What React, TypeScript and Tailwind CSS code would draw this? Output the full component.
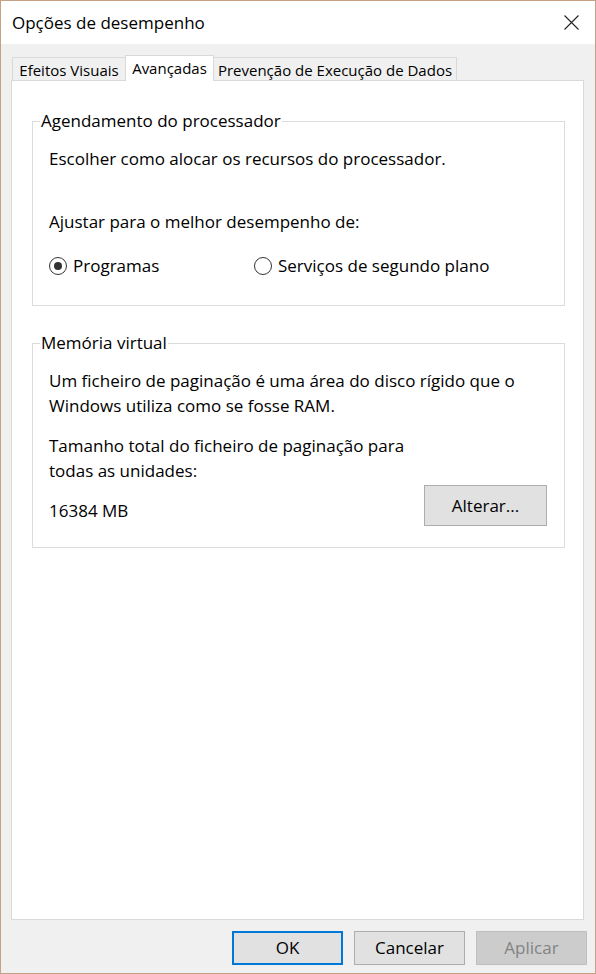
import React from "react";

function Radio({ checked }: { checked?: boolean }) {
  return (
    <span className="w-[18px] h-[18px] rounded-full border border-[#333333] bg-white flex items-center justify-center shrink-0">
      {checked && <span className="w-[8px] h-[8px] rounded-full bg-[#333333]" />}
    </span>
  );
}

export default function App() {
  return (
    <div className="w-[596px] h-[974px] border border-[#c7a184] bg-[#f0f0f0] flex flex-col text-black font-['Open_Sans',sans-serif] overflow-hidden">
      <div className="h-[43px] bg-white flex items-center justify-between pl-[11px] pr-[16px] shrink-0">
        <span className="text-[17px] leading-[24px]">Opções de desempenho</span>
        <svg width="15" height="15" viewBox="0 0 15 15">
          <path d="M0.5 0.5 L14.5 14.5 M14.5 0.5 L0.5 14.5" stroke="#222" strokeWidth="1.1" fill="none" />
        </svg>
      </div>

      <div className="pt-[11px] pl-[11px] flex items-end shrink-0 text-[15px]">
        <div className="w-[113px] h-[23px] border-l border-t border-[#d9d9d9] bg-[#f0f0f0] flex items-center justify-center pt-[2px]">
          Efeitos Visuais
        </div>
        <div className="relative z-10 w-[89px] h-[26px] -mb-px border-l border-r border-t border-[#d9d9d9] bg-white flex items-center justify-center">
          Avançadas
        </div>
        <div className="w-[243px] h-[23px] border-r border-t border-[#d9d9d9] bg-[#f0f0f0] flex items-center justify-center pt-[2px]">
          Prevenção de Execução de Dados
        </div>
      </div>

      <div className="ml-[10px] w-[573px] h-[840px] border border-[#d9d9d9] bg-white shrink-0 text-[17px] leading-[25px]">
        <fieldset className="ml-[20px] mt-[28px] w-[533px] border border-[#dcdcdc] pb-[27px]">
          <legend className="ml-[7px] px-px leading-[24px]">Agendamento do processador</legend>
          <div className="pl-[16px]">
            <div className="pt-[13px]">Escolher como alocar os recursos do processador.</div>
            <div className="mt-[38px]">Ajustar para o melhor desempenho de:</div>
            <div className="mt-[19px] flex items-center">
              <div className="flex items-center w-[205px]">
                <Radio checked />
                <span className="ml-[6px]">Programas</span>
              </div>
              <div className="flex items-center">
                <Radio />
                <span className="ml-[6px]">Serviços de segundo plano</span>
              </div>
            </div>
          </div>
        </fieldset>

        <fieldset className="ml-[20px] mt-[25px] w-[533px] border border-[#dcdcdc] pb-[21px]">
          <legend className="ml-[7px] px-px leading-[24px]">Memória virtual</legend>
          <div className="pl-[16px] pr-[17px]">
            <div className="pt-[13px]">
              Um ficheiro de paginação é uma área do disco rígido que o
              <br />
              Windows utiliza como se fosse RAM.
            </div>
            <div className="mt-[15px]">
              Tamanho total do ficheiro de paginação para
              <br />
              todas as unidades:
            </div>
            <div className="mt-[2px] flex justify-between">
              <span className="self-end mb-[3px]">16384 MB</span>
              <button className="w-[123px] h-[41px] border border-[#adadad] bg-[#e1e1e1]">Alterar...</button>
            </div>
          </div>
        </fieldset>
      </div>

      <div className="mt-[11px] flex justify-end pr-[8px] gap-[11px] text-[17px] shrink-0">
        <button className="w-[111px] h-[34px] border-2 border-[#0078d7] bg-[#e1e1e1]">OK</button>
        <button className="w-[111px] h-[34px] border border-[#adadad] bg-[#e1e1e1]">Cancelar</button>
        <button className="w-[111px] h-[34px] border border-[#bfbfbf] bg-[#cccccc] text-[#838383]">Aplicar</button>
      </div>
    </div>
  );
}
